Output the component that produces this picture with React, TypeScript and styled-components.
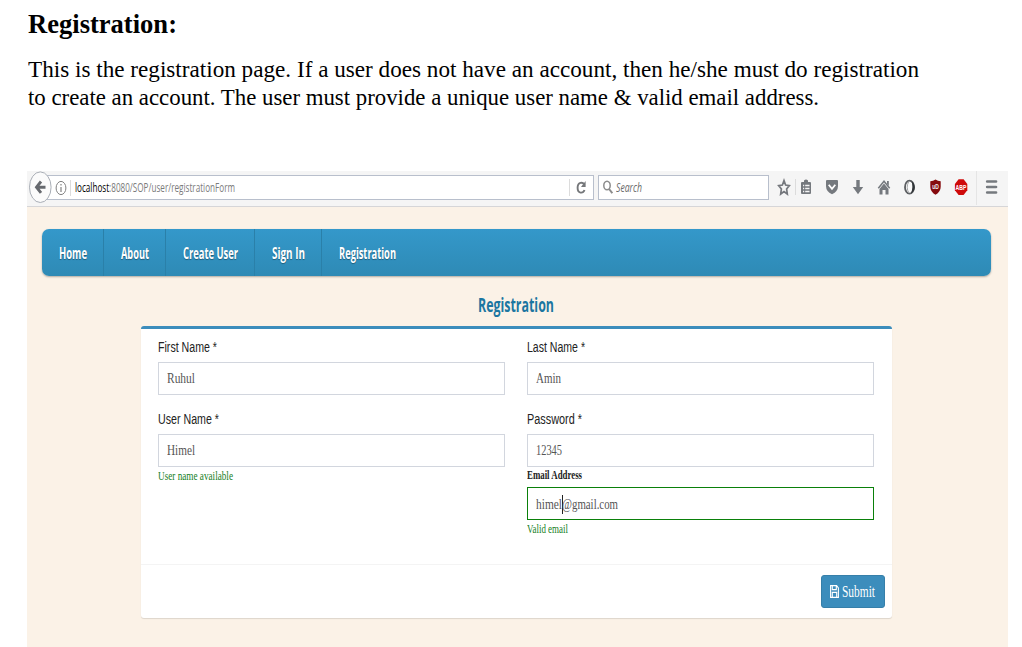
import React, { useLayoutEffect, useRef, useState } from "react";
import styled, { createGlobalStyle } from "styled-components";

const Global = createGlobalStyle`
  * { box-sizing: border-box; }
  body { margin: 0; background: #fff; overflow: hidden; }
`;

const FitBox = styled.span<{ $w: number }>`
  display: block;
  flex: none;
  width: ${(p) => p.$w}px;
  white-space: pre;
`;
const FitInner = styled.span`
  display: inline-block;
  vertical-align: top;
  transform-origin: 0 50%;
`;

/* Condenses a run of text horizontally to a given width. */
function Fit({ w, children }: { w: number; children: React.ReactNode }) {
  const ref = useRef<HTMLSpanElement>(null);
  const [scale, setScale] = useState(1);
  useLayoutEffect(() => {
    if (!ref.current) return;
    const natural = parseFloat(getComputedStyle(ref.current).width);
    if (natural) setScale(w / natural);
  }, [w]);
  return (
    <FitBox $w={w}>
      <FitInner ref={ref} style={{ transform: `scaleX(${scale})` }}>{children}</FitInner>
    </FitBox>
  );
}

const serif = `"Liberation Serif", "Times New Roman", serif`;
const sans = `"Liberation Sans", Arial, sans-serif`;
const ui = `"Open Sans", "Noto Sans", sans-serif`;

const Page = styled.main`
  width: 1022px;
  height: 647px;
  display: flex;
  flex-direction: column;
  overflow: hidden;
  background: #fff;
`;
const Doc = styled.section`
  height: 171px;
  flex: none;
  padding: 9px 28px 0;
  font-family: ${serif};
  color: #000;
`;
const DocTitle = styled.h1`
  margin: 0 0 17px;
  font-size: 26.5px;
  line-height: 30px;
  font-weight: 700;
`;
const DocText = styled.p`
  margin: 0;
  font-size: 22.5px;
  line-height: 28px;
`;
const Browser = styled.section`
  width: 981px;
  flex: 1;
  margin-left: 27px;
  background: #fbf2e7;
`;
const Toolbar = styled.div`
  height: 36px;
  display: flex;
  align-items: flex-start;
  background: #f5f5f5;
  border-bottom: 1px solid #d6d6d8;
`;
const BackButton = styled.svg`
  flex: none;
  width: 24px;
  height: 33px;
  margin: 0 -6px 0 1px;
  position: relative;
  z-index: 1;
`;
const bar = `
  height: 25px;
  margin-top: 4px;
  display: flex;
  align-items: center;
  background: #fff;
  border: 1px solid #b8bfcc;
  font-family: ${ui};
`;
const UrlBar = styled.div`
  ${bar}
  width: 549px;
  padding-left: 8px;
  font-size: 12px;
  color: #7b7b7b;
  b { font-weight: 400; color: #000; }
`;
const InfoIcon = styled.svg`
  width: 12px;
  height: 16px;
  flex: none;
`;
const Divider = styled.i<{ $h: number; $l: number; $r: number }>`
  flex: none;
  width: 1px;
  height: ${(p) => p.$h}px;
  margin: 0 ${(p) => p.$r}px 0 ${(p) => p.$l}px;
  background: #dcdcdc;
`;
const Reload = styled.svg`
  width: 24px;
  height: 23px;
  margin-right: -1px;
`;
const Spacer = styled.span`
  flex: 1;
`;
const SearchBar = styled.div`
  ${bar}
  width: 171px;
  margin-left: 4px;
  padding-left: 4px;
  gap: 3px;
  font-size: 12px;
  font-style: italic;
  color: #6b6b6b;
`;
const Tools = styled.svg`
  flex: none;
  width: 239px;
  height: 35px;
`;
const Nav = styled.nav`
  margin: 22px 17px 0 15px;
  height: 47px;
  display: flex;
  border-radius: 7px;
  background: linear-gradient(#3498ca, #2e8ab5);
  box-shadow: 0 1px 2px rgba(0, 0, 0, 0.3);
  overflow: hidden;
`;
const NavItem = styled.a<{ $w: number; $last?: boolean }>`
  width: ${(p) => p.$w}px;
  padding: 0 0 0 16.500px;
  display: flex;
  align-items: center;
  border-right: ${(p) => (p.$last ? "0" : "1px solid #2a80a9")};
  color: #fff;
  font: 700 16.5px/24px ${ui};
  text-shadow: 0 1px 1px rgba(0, 0, 0, 0.35);
`;
const Title = styled.h2`
  margin: 13px 0 0 451px;
  height: 37px;
  color: #1b76a1;
  font: 700 20px/31px ${ui};
`;
const Card = styled.form`
  width: 751px;
  height: 292px;
  margin-left: 114px;
  display: flex;
  flex-direction: column;
  background: #fff;
  border-top: 3px solid #3c8dbc;
  border-radius: 3px;
  box-shadow: 0 1px 1px rgba(0, 0, 0, 0.12);
`;
const Fields = styled.div`
  flex: 1;
  padding: 8px 17px 0;
  display: flex;
  gap: 22px;
`;
const Column = styled.div`
  width: 347px;
`;
const Field = styled.div`
  height: 72px;
`;
const Label = styled.label`
  display: block;
  height: 25px;
  font: 14px/20px ${sans};
  color: #222;
`;
const SmallLabel = styled.label`
  display: block;
  height: 20px;
  font: 700 11.5px/16px ${serif};
  color: #222;
`;
const Input = styled.div<{ $valid?: boolean }>`
  height: 33px;
  padding: ${(p) => (p.$valid ? "1px 0 0 8px" : "0 0 1px 8px")};
  display: flex;
  align-items: center;
  border: 1px solid ${(p) => (p.$valid ? "#0a800a" : "#d2d6de")};
  color: #555;
  font: 15px/20px ${serif};
`;
const Caret = styled.i`
  width: 1px;
  height: 19px;
  margin: 0 -1px 0 0;
  background: #222;
`;
const Hint = styled.p`
  margin: 0;
  padding-top: 1px;
  color: #15801d;
  font: 11.5px/16px ${serif};
`;
const Footer = styled.div`
  height: 54px;
  padding: 10px 7px 0 0;
  display: flex;
  justify-content: flex-end;
  border-top: 1px solid #f4f4f4;
`;
const Submit = styled.button`
  width: 64px;
  height: 33px;
  padding: 0 0 0 8px;
  display: flex;
  align-items: center;
  gap: 3px;
  text-align: left;
  color: #fff;
  background: #3c8dbc;
  border: 1px solid #367fa9;
  border-radius: 3px;
  font: 16px/20px ${serif};
`;

const navItems = [
  { label: "Home", w: 62, text: 28 },
  { label: "About", w: 62, text: 28 },
  { label: "Create User", w: 89, text: 55 },
  { label: "Sign In", w: 67, text: 33 },
  { label: "Registration", w: 100, text: 57 },
];

export default function App() {
  return (
    <Page>
      <Global />
      <Doc>
        <DocTitle><Fit w={149}>Registration:</Fit></DocTitle>
        <DocText>
          <Fit w={891}>This is the registration page. If a user does not have an account, then he/she must do registration</Fit>
          <Fit w={791}>to create an account. The user must provide a unique user name &amp; valid email address.</Fit>
        </DocText>
      </Doc>
      <Browser>
        <Toolbar>
          <BackButton viewBox="0 0 24 33">
            <ellipse cx="12.3" cy="16.2" rx="10.8" ry="15.3" fill="#fbfbfb" stroke="#a9aeb6" />
            <path d="M17.5 16.2H9M13 10.500l-4.500 5.700 4.500 5.700" fill="none" stroke="#66696e" strokeWidth="2.9" />
          </BackButton>
          <UrlBar>
            <InfoIcon viewBox="0 0 12 16">
              <ellipse cx="6" cy="8" rx="4.9" ry="6.6" fill="none" stroke="#818181" />
              <path d="M6 7v5M6 4v1.6" stroke="#777" strokeWidth="1.1" />
            </InfoIcon>
            <Divider $h={16} $l={3} $r={4} />
            <Fit w={160}><b>localhost</b>:8080/SOP/user/registrationForm</Fit>
            <Spacer />
            <Divider $h={17} $l={0} $r={0} />
            <Reload viewBox="0 0 24 23">
              <path d="M14 8.200C12.800 6 7.600 5.800 7.600 11.800s5.400 6 6.900 2.200" fill="none" stroke="#75777a" strokeWidth="1.9" />
              <path d="M15.600 5v6h-4.600z" fill="#75777a" />
            </Reload>
          </UrlBar>
          <SearchBar>
            <svg width="10" height="15" viewBox="0 0 10 15">
              <ellipse cx="4" cy="5.500" rx="3.200" ry="4.300" fill="none" stroke="#8c8c8c" strokeWidth="1.500" />
              <path d="M6.100 9l3.200 4.200" stroke="#8c8c8c" strokeWidth="1.900" />
            </svg>
            <Fit w={26}>Search</Fit>
          </SearchBar>
          <Tools viewBox="769 171 239 35">
            <path d="M784 180.500l1.600 4.600 3.700.500-2.700 3.300.700 5.100-3.300-2.500-3.300 2.500.700-5.100-2.700-3.300 3.700-.500z" fill="none" stroke="#75787d" strokeWidth="1.700" />
            <path d="M795.500 179v16" stroke="#dcdcdc" />
            <path d="M802 182h2v-1.500q2-2 4 0v1.500h2q1 0 1 1v10q0 1-1 1h-8q-1 0-1-1v-10q0-1 1-1z" fill="#75797e" />
            <path d="M803 185.500h1.200m1 0h4.300M803 188.500h1.200m1 0h4.300M803 191.500h1.200m1 0h4.300" stroke="#f5f5f5" strokeWidth="1.400" />
            <path d="M827 180h10q1 0 1 1v5q0 5.500-6 8.200-6-2.700-6-8.200v-5q0-1 1-1z" fill="#75797e" />
            <path d="M828.700 184.800l3.300 4 3.300-4" fill="none" stroke="#fff" strokeWidth="1.800" />
            <path d="M856.300 180h3.400v7h3.500l-5.200 7.300-5.200-7.300h3.500z" fill="#75797e" />
            <path d="M878.300 188.300l5.700-7 5.700 7" fill="none" stroke="#75797e" strokeWidth="1.500" />
            <path d="M887 181h1.800v5l-1.800-2zM884 183.500l4.500 5.500v5.500h-3v-4.500h-3v4.500h-3V189z" fill="#75797e" />
            <ellipse cx="909.500" cy="187.200" rx="4.500" ry="6.500" fill="#fafafa" stroke="#5b5e61" strokeWidth="1.800" />
            <path d="M909 181.200q-3.600 6 0 12" fill="none" stroke="#a5a7a9" strokeWidth="1" />
            <path d="M911.500 181q3 2 3.300 6.200-.2 4-3.800 6.200 2.500-6 .5-12.400z" fill="#303437" />
            <path d="M930.300 181.300q3 0 5.200-1.700 2.200 1.700 5.200 1.700v5.500q0 5-5.200 8-5.200-3-5.200-8z" fill="#850a0d" />
            <text x="932.200" y="189.300" fontFamily="Liberation Sans, sans-serif" fontWeight="700" fontSize="6.500" textLength="6.600" lengthAdjust="spacingAndGlyphs" fill="#eee">uD</text>
            <path d="M958.600 179.200h5l3.700 4.800v6.200l-3.700 4.800h-5l-3.700-4.800V184z" fill="#cf0a0a" />
            <text x="955.600" y="190" fontFamily="Liberation Sans, sans-serif" fontWeight="700" fontSize="8" textLength="10.800" lengthAdjust="spacingAndGlyphs" fill="#fff">ABP</text>
            <path d="M976.500 171v34" stroke="#e5e5e5" />
            <path d="M987.200 181.500h8.800M987.200 187h8.800M987.200 192.500h8.800" stroke="#75797e" strokeWidth="2.700" strokeLinecap="round" />
          </Tools>
        </Toolbar>
        <Nav>
          {navItems.map((n, i) => (
            <NavItem key={n.label} $w={n.w} $last={i === navItems.length - 1}>
              <Fit w={n.text}>{n.label}</Fit>
            </NavItem>
          ))}
        </Nav>
        <Title><Fit w={76}>Registration</Fit></Title>
        <Card>
          <Fields>
            <Column>
              <Field>
                <Label><Fit w={59}>First Name *</Fit></Label>
                <Input><Fit w={28}>Ruhul</Fit></Input>
              </Field>
              <Field>
                <Label><Fit w={61}>User Name *</Fit></Label>
                <Input><Fit w={28}>Himel</Fit></Input>
                <Hint><Fit w={75}>User name available</Fit></Hint>
              </Field>
            </Column>
            <Column>
              <Field>
                <Label><Fit w={58}>Last Name *</Fit></Label>
                <Input><Fit w={25}>Amin</Fit></Input>
              </Field>
              <Label><Fit w={55}>Password *</Fit></Label>
              <Input><Fit w={26}>12345</Fit></Input>
              <SmallLabel><Fit w={55}>Email Address</Fit></SmallLabel>
              <Input $valid>
                <Fit w={26}>himel</Fit>
                <Caret />
                <Fit w={56}>@gmail.com</Fit>
              </Input>
              <Hint><Fit w={41}>Valid email</Fit></Hint>
            </Column>
          </Fields>
          <Footer>
            <Submit type="button">
              <svg width="9" height="13" viewBox="0 0 9 13">
                <path d="M.6.6h6L8.400 3v9.400H.6zM2.300.6v4h4v-4M2.300 12.400v-5h4.400v5" fill="none" stroke="#fff" strokeWidth="1.100" />
              </svg>
              <Fit w={33}>Submit</Fit>
            </Submit>
          </Footer>
        </Card>
      </Browser>
    </Page>
  );
}
